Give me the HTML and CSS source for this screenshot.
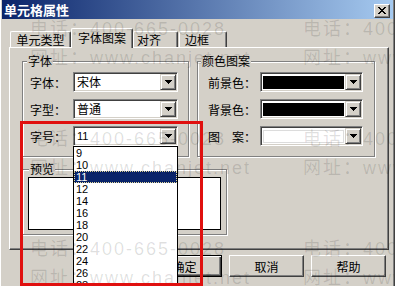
FILE: index.html
```html
<!DOCTYPE html>
<html lang="zh-CN">
  <head>
    <meta charset="UTF-8" />
    <meta name="viewport" content="width=device-width, initial-scale=1.0" />
    <title>单元格属性</title>
    <link rel="stylesheet" href="styles.css">
  </head>
  <body>
    <div class="window">
      <div class="titlebar">
        <span class="title">单元格属性</span>
        <span class="closeBtn">
          <svg width="8" height="7" viewBox="0 0 8 7">
            <path d="M0 0h2v1H0zM6 0h2v1H6zM1 1h2v1H1zM5 1h2v1H5zM2 2h4v1H2zM3 3h2v1H3zM2 4h4v1H2zM1 5h2v1H1zM5 5h2v1H5zM0 6h2v1H0zM6 6h2v1H6z" fill="#000" />
          </svg>
        </span>
      </div>

      <div class="tabs">
        <div class="tab tabType">单元类型</div>
        <div class="tab tabFont">字体图案</div>
        <div class="tab tabAlign">对齐</div>
        <div class="tab tabBorder">边框</div>
      </div>

      <div class="panel">
        <div class="groupRow">
          <div class="group fontGroup">
            <span class="groupTitle">字体</span>
            <div class="field">
              <label class="label">字体：</label>
              <div class="combo">
                <span class="comboText">宋体</span>
                <span class="arrowBtn"><svg width="7" height="4"><path d="M0 0h7v1H0zM1 1h5v1H1zM2 2h3v1H2zM3 3h1v1H3z" /></svg></span>
              </div>
            </div>
            <div class="field">
              <label class="label">字型：</label>
              <div class="combo">
                <span class="comboText">普通</span>
                <span class="arrowBtn"><svg width="7" height="4"><path d="M0 0h7v1H0zM1 1h5v1H1zM2 2h3v1H2zM3 3h1v1H3z" /></svg></span>
              </div>
            </div>
            <div class="field">
              <label class="label">字号：</label>
              <div class="combo">
                <span class="comboText num">11</span>
                <span class="arrowBtn"><svg width="7" height="4"><path d="M0 0h7v1H0zM1 1h5v1H1zM2 2h3v1H2zM3 3h1v1H3z" /></svg></span>
                <ul class="dropList">
                  <li>9</li>
                  <li>10</li>
                  <li class="selected">11</li>
                  <li>12</li>
                  <li>14</li>
                  <li>16</li>
                  <li>18</li>
                  <li>20</li>
                  <li>22</li>
                  <li>24</li>
                  <li>26</li>
                  <li>28</li>
                  <li>36</li>
                </ul>
              </div>
            </div>
          </div>

          <div class="group colorGroup">
            <span class="groupTitle">颜色图案</span>
            <div class="field">
              <label class="label">前景色：</label>
              <div class="combo">
                <span class="swatch"></span>
                <span class="arrowBtn"><svg width="7" height="4"><path d="M0 0h7v1H0zM1 1h5v1H1zM2 2h3v1H2zM3 3h1v1H3z" /></svg></span>
              </div>
            </div>
            <div class="field">
              <label class="label">背景色：</label>
              <div class="combo">
                <span class="swatch"></span>
                <span class="arrowBtn"><svg width="7" height="4"><path d="M0 0h7v1H0zM1 1h5v1H1zM2 2h3v1H2zM3 3h1v1H3z" /></svg></span>
              </div>
            </div>
            <div class="field">
              <label class="label">图　案：</label>
              <div class="combo">
                <span class="swatch pattern"></span>
                <span class="arrowBtn"><svg width="7" height="4"><path d="M0 0h7v1H0zM1 1h5v1H1zM2 2h3v1H2zM3 3h1v1H3z" /></svg></span>
              </div>
            </div>
          </div>
        </div>

        <div class="group previewGroup">
          <span class="groupTitle">预览</span>
          <div class="previewBox"></div>
        </div>
      </div>

      <div class="actWrapper">
        <button class="btn btnDefault">确定</button>
        <button class="btn">取消</button>
        <button class="btn">帮助</button>
      </div>

      <div class="mark">
        <div><p>电话：400-665-0028</p><p>网址：www.chanjet.net</p></div>
        <div><p>电话：400-665-0028</p><p>网址：www.chanjet.net</p></div>
        <div><p>电话：400-665-0028</p><p>网址：www.chanjet.net</p></div>
        <div><p>电话：400-665-0028</p><p>网址：www.chanjet.net</p></div>
        <div><p>电话：400-665-0028</p><p>网址：www.chanjet.net</p></div>
        <div><p>电话：400-665-0028</p><p>网址：www.chanjet.net</p></div>
      </div>

      <div class="redBox"></div>
    </div>
  </body>
</html>
```

FILE: styles.css
```css
* {
  margin: 0;
  padding: 0;
  box-sizing: border-box;
}

body {
  background: #d4d0c8;
  font-family: "Noto Sans CJK SC", sans-serif;
  font-size: 12px;
  color: #000;
}

.window {
  position: relative;
  width: 395px;
  height: 286px;
  overflow: hidden;
  border-right: 1px solid #404040;
  box-shadow: inset -1px 0 #808080, inset 1px 0 #fff;
}

/* title bar */
.titlebar {
  display: flex;
  justify-content: space-between;
  width: 391px;
  height: 19px;
  margin-left: 2px;
  padding: 0 3px 0 2px;
  background: linear-gradient(to right, #0a246a, #a6caf0);
}

.title {
  color: #fff;
  font-weight: bold;
  font-size: 13px;
  line-height: 19px;
}

.closeBtn {
  width: 16px;
  height: 14px;
  margin-top: 4px;
  padding: 2px 0 0 3px;
  background: #d4d0c8;
  border: 1px solid;
  border-color: #fff #404040 #404040 #fff;
  box-shadow: inset -1px -1px #808080;
}

.closeBtn svg {
  display: block;
}

/* tabs */
.tabs {
  display: flex;
  align-items: flex-end;
  height: 19px;
  margin: 9px 0 0 10px;
}

.tab {
  height: 16px;
  padding-top: 1px;
  line-height: 14px;
  text-align: center;
  border: 1px solid #fff;
  border-right-color: #404040;
  border-bottom: none;
  border-radius: 2px 2px 0 0;
  box-shadow: inset -1px 0 #808080;
}

.tabType {
  width: 61px;
}

.tabFont {
  position: relative;
  z-index: 2;
  width: 62px;
  height: 20px;
  padding-top: 2px;
  margin-bottom: -1px;
  background: #d4d0c8;
}

.tabAlign {
  width: 45px;
  text-align: left;
  padding-left: 3px;
}

.tabBorder {
  width: 48px;
  margin-left: 1px;
  text-align: left;
  padding-left: 5px;
}

/* panel */
.panel {
  width: 380px;
  height: 203px;
  margin-left: 9px;
  padding: 13px 0 0 12px;
  border: 1px solid #fff;
  border-right-color: #404040;
  border-bottom-color: #404040;
  box-shadow: inset -1px -1px #808080;
}

.groupRow {
  display: flex;
  gap: 8px;
}

.group {
  position: relative;
  border: 1px solid #808080;
  box-shadow: inset 1px 1px #fff, 1px 1px #fff;
}

.groupTitle {
  position: absolute;
  top: -8px;
  left: 4px;
  padding: 0 1px;
  line-height: 14px;
  background: #d4d0c8;
}

.fontGroup {
  width: 167px;
  height: 96px;
  padding: 10px 0 0 7px;
}

.colorGroup {
  width: 178px;
  height: 96px;
  padding: 10px 0 0 10px;
}

.colorGroup .groupTitle {
  left: 3px;
}

.previewGroup {
  width: 205px;
  height: 66px;
  margin-top: 12px;
  padding: 7px 0 0 5px;
}

.previewGroup .groupTitle {
  left: 6px;
}

.previewBox {
  width: 193px;
  height: 53px;
  background: #fff;
  border: 1px solid #000;
}

/* fields */
.field {
  display: flex;
  align-items: center;
  height: 20px;
  margin-bottom: 7px;
}

.label {
  width: 43px;
}

.colorGroup .label {
  width: 52px;
}

.combo {
  position: relative;
  display: flex;
  align-items: center;
  width: 105px;
  height: 20px;
  background: #fff;
  border: 1px solid;
  border-color: #808080 #fff #fff #808080;
  box-shadow: inset 1px 1px #404040, inset -1px -1px #d4d0c8;
}

.colorGroup .combo {
  width: 103px;
}

.comboText {
  flex: 1;
  padding-left: 3px;
  line-height: 18px;
}

.num {
  font-family: "Liberation Sans", sans-serif;
  font-size: 11px;
}

.arrowBtn {
  width: 16px;
  height: 16px;
  margin-right: 1px;
  padding: 5px 0 0 4px;
  background: #d4d0c8;
  border: 1px solid;
  border-color: #d4d0c8 #404040 #404040 #d4d0c8;
  box-shadow: inset 1px 1px #fff, inset -1px -1px #808080;
}

.arrowBtn svg {
  display: block;
}

.swatch {
  flex: 1;
  height: 13px;
  margin: 0 1px 0 2px;
  background: #000;
}

.swatch.pattern {
  background: #fff;
  border: 1px solid #dcdcdc;
}

/* open list of font sizes */
.dropList {
  position: absolute;
  z-index: 10;
  left: -1px;
  top: calc(100% + 1px);
  width: 105px;
  list-style: none;
  background: #fff;
  border: 1px solid #000;
  font-family: "Liberation Sans", sans-serif;
  font-size: 11px;
}

.dropList li {
  height: 12px;
  line-height: 12px;
  padding-left: 2px;
}

.dropList .selected {
  background: #0a246a;
  color: #fff;
  outline: 1px dotted #e8dc9c;
  outline-offset: -1px;
}

/* buttons */
.actWrapper {
  display: flex;
  justify-content: flex-end;
  gap: 7px;
  margin-top: 5px;
  padding-right: 8px;
}

.btn {
  width: 75px;
  height: 22px;
  font-family: inherit;
  font-size: 12px;
  color: #000;
  background: #d4d0c8;
  border: 1px solid;
  border-color: #fff #404040 #404040 #fff;
  box-shadow: inset -1px -1px #808080;
}

.btnDefault {
  border-color: #000;
  box-shadow: inset 1px 1px #fff, inset -1px -1px #404040, inset -2px -2px #808080;
}

/* watermark of the screenshot */
.mark {
  position: absolute;
  z-index: 15;
  top: 15px;
  left: 30px;
  display: grid;
  grid-template-columns: 273px 273px;
  grid-auto-rows: 110px;
  font-family: "Liberation Sans", "Noto Sans CJK SC", sans-serif;
  font-size: 18px;
  line-height: 29px;
  letter-spacing: 2px;
  white-space: nowrap;
  color: rgba(0, 0, 0, 0.13);
  pointer-events: none;
}

.redBox {
  position: absolute;
  z-index: 20;
  left: 20px;
  top: 121px;
  width: 183px;
  height: 165px;
  border: 3px solid #e0100f;
}
```
